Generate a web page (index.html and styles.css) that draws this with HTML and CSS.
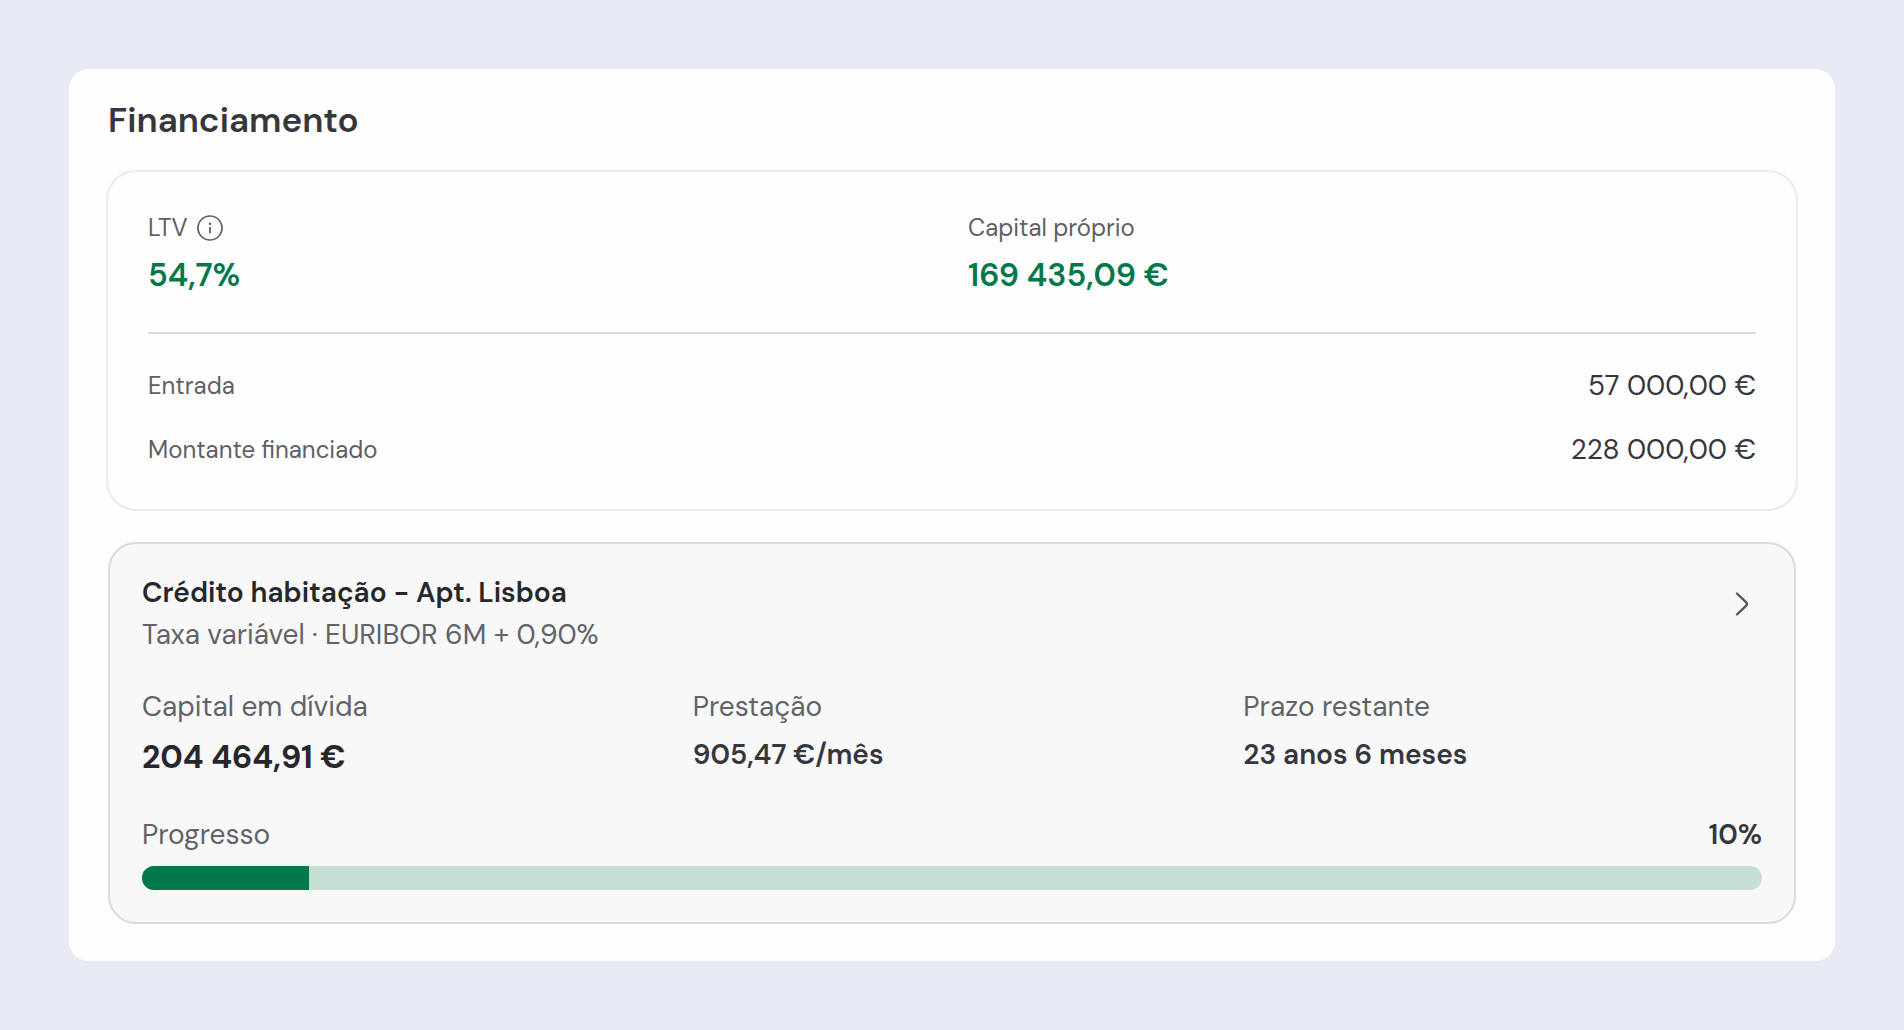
FILE: index.html
```html
<!DOCTYPE html>
<html lang="pt">
<head>
    <meta charset="UTF-8">
    <meta name="viewport" content="width=device-width, initial-scale=1.0">
    <title>Financiamento</title>
    <link rel="stylesheet" href="styles.css">
</head>
<body>
    <main class="panel">
        <h1 class="panel-title">Financiamento</h1>

        <section class="summary">
            <div class="summary-top">
                <div class="metric">
                    <div class="label">
                        LTV
                        <button class="info" type="button" aria-label="Informação sobre LTV">
                            <svg width="26" height="26" viewBox="0 0 26 26" fill="none">
                                <circle cx="13" cy="13" r="12" stroke="currentColor" stroke-width="1.7"/>
                                <path d="M13 12v6.2" stroke="currentColor" stroke-width="1.8"/>
                                <circle cx="13" cy="8.7" r="1.2" fill="currentColor"/>
                            </svg>
                        </button>
                    </div>
                    <div class="metric-value">54,7%</div>
                </div>
                <div class="metric">
                    <div class="label">Capital próprio</div>
                    <div class="metric-value">169 435,09 €</div>
                </div>
            </div>
            <div class="row">
                <span class="label">Entrada</span>
                <span class="row-value">57 000,00 €</span>
            </div>
            <div class="row">
                <span class="label">Montante financiado</span>
                <span class="row-value">228 000,00 €</span>
            </div>
        </section>

        <section class="loan">
            <div class="loan-header">
                <div class="loan-heading">
                    <h2 class="loan-title">Crédito habitação - Apt. Lisboa</h2>
                    <p class="loan-rate">Taxa variável · EURIBOR 6M + 0,90%</p>
                </div>
                <a class="loan-link" href="#credito" aria-label="Ver crédito">
                    <svg width="40" height="54" viewBox="0 0 40 54" fill="none">
                        <path d="M15 16.5L24.2 25.4Q25.8 27 24.2 28.6L15 37.5" stroke="currentColor" stroke-width="2.4" stroke-linecap="round" stroke-linejoin="round"/>
                    </svg>
                </a>
            </div>

            <div class="loan-data">
                <div class="loan-item">
                    <span>Capital em dívida</span>
                    <strong class="loan-debt">204 464,91 €</strong>
                </div>
                <div class="loan-item">
                    <span>Prestação</span>
                    <strong>905,47 €/mês</strong>
                </div>
                <div class="loan-item">
                    <span>Prazo restante</span>
                    <strong>23 anos 6 meses</strong>
                </div>
            </div>

            <div class="progress-header">
                <label for="progresso">Progresso</label>
                <strong>10%</strong>
            </div>
            <progress class="progress" id="progresso" value="10.3" max="100"></progress>
        </section>
    </main>
</body>
</html>
```
FILE: styles.css
```css
* {
    margin: 0;
    padding: 0;
    box-sizing: border-box;
}

body {
    padding: 69px;
    background-color: #e7eaf4;
    color: #36373d;
    font-family: "DM Sans", Inter, sans-serif;
    font-size: 28px;
    line-height: 36px;
}

.panel {
    padding: 28px 39px 37px;
    background-color: #fefefe;
    border-radius: 20px;
}

.panel-title {
    margin-bottom: 29px;
    font-size: 35px;
    font-weight: 600;
    line-height: 46px;
}

/* resumo */
.summary {
    display: flex;
    flex-direction: column;
    gap: 24px;
    padding: 40px 40px 39px;
    border-radius: 28px;
    box-shadow: 0 0 0 2px #ebebeb;
}

.summary-top {
    display: grid;
    grid-template-columns: 1fr 1fr;
    gap: 32px;
    margin-bottom: 8px;
    padding-bottom: 35px;
    border-bottom: 2px solid #dadada;
}

.metric {
    display: flex;
    flex-direction: column;
    gap: 9px;
}

.label {
    display: flex;
    align-items: center;
    gap: 9px;
    color: #5f6065;
    font-size: 24px;
    line-height: 32px;
}

.info {
    display: flex;
    border: none;
    background: none;
    color: inherit;
    cursor: pointer;
}

.metric-value {
    color: #00784a;
    font-size: 32px;
    font-weight: 600;
    line-height: 44px;
}

.row {
    display: flex;
    justify-content: space-between;
    align-items: center;
    line-height: 40px;
}

/* credito */
.loan {
    margin-top: 33px;
    padding: 33px 32px 32px;
    border: 2px solid #dadada;
    border-radius: 28px;
    background-color: #f8f8f8;
}

.loan-header {
    display: flex;
    justify-content: space-between;
    align-items: flex-start;
    margin-bottom: 36px;
}

.loan-heading {
    display: flex;
    flex-direction: column;
    gap: 8px;
}

.loan-title {
    color: #26272d;
    font-size: 28px;
    font-weight: 600;
    line-height: 32px;
}

.loan-rate,
.loan-item span,
.progress-header label {
    color: #626368;
}

.loan-link {
    display: flex;
    color: #56575d;
}

.loan-data {
    display: grid;
    grid-template-columns: repeat(3, 1fr);
    gap: 32px;
    margin-bottom: 40px;
}

.loan-item {
    display: flex;
    flex-direction: column;
    gap: 12px;
}

strong {
    font-weight: 600;
}

.loan-item .loan-debt {
    color: #26272d;
    font-size: 32px;
    font-weight: 700;
    line-height: 40px;
}

.progress-header {
    display: flex;
    justify-content: space-between;
    margin-bottom: 13px;
}

.progress {
    display: block;
    width: 100%;
    height: 24px;
    appearance: none;
    border: none;
    border-radius: 12px;
    overflow: hidden;
}

.progress::-webkit-progress-bar {
    background-color: #c7ded5;
}

.progress::-webkit-progress-value {
    background-color: #00784a;
}
```
